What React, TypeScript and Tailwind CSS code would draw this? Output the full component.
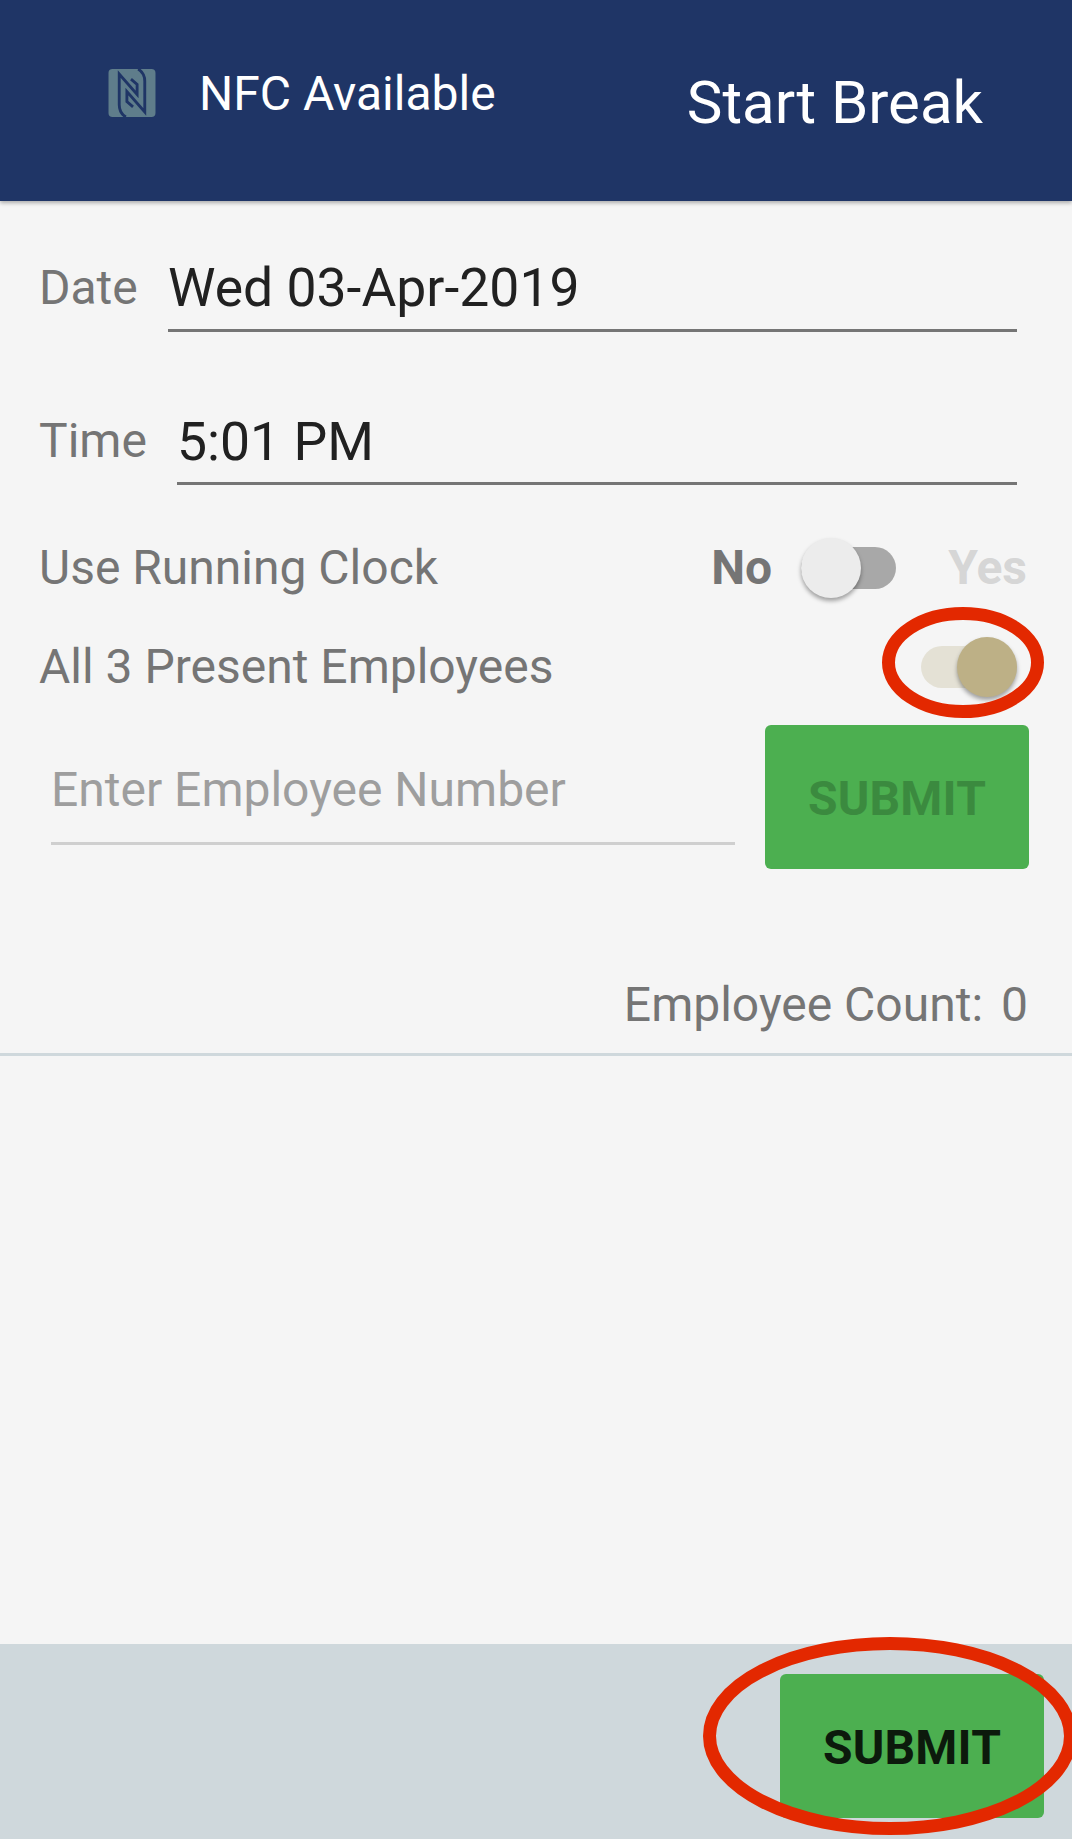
export default function App() {
  return (
    <div className="relative w-[1072px] h-[1839px] overflow-hidden bg-[#f5f5f5] flex flex-col font-['Roboto',sans-serif]">
      <header className="h-[201px] shrink-0 bg-[#1f3566] shadow-[0_2px_4px_rgba(0,0,0,0.3)] z-10 flex items-start text-white">
        <svg className="mt-[69px] ml-[108px] w-[48px] h-[48px]" viewBox="0 0 46 47">
          <rect x="0" y="0" width="46" height="47" rx="4" fill="#5f7d8b" />
          <g fill="none" stroke="#1f3566" strokeWidth="2.8" strokeLinejoin="miter">
            <path d="M17 47 C12 44 10.5 40 10.5 35 L10.5 5 L28 25 L28 15 L22 10" />
            <path d="M29 0 C34 3 35.5 7 35.5 12 L35.5 42 L18 22 L18 32 L24 37" />
          </g>
        </svg>
        <span className="mt-[64px] ml-[43px] text-[48px] leading-[60px]">NFC Available</span>
        <span className="mt-[66px] ml-auto mr-[89px] text-[60px] leading-[74px]">Start Break</span>
      </header>
      <main className="flex-1 flex flex-col">
        <div className="mt-[50px] ml-[39px] mr-[55px] flex items-end h-[81px]">
          <span className="w-[129px] shrink-0 text-[48px] leading-[56px] pb-[16px] text-[#757575]">Date</span>
          <div className="flex-1 border-b-[3px] border-[#757575] text-[53.5px] leading-[74px] text-[#212121] h-[81px]">Wed 03-Apr-2019</div>
        </div>
        <div className="mt-[73px] ml-[39px] mr-[55px] flex items-end h-[80px]">
          <span className="w-[138px] shrink-0 text-[48px] leading-[56px] pb-[16px] text-[#757575]">Time</span>
          <div className="flex-1 border-b-[3px] border-[#757575] text-[53.5px] leading-[74px] text-[#212121] h-[80px]">5:01 PM</div>
        </div>
        <div className="mt-[53px] ml-[39px] mr-[45px] flex items-center h-[60px] text-[48px] text-[#757575]">
          <span className="flex-1">Use Running Clock</span>
          <span className="font-bold">No</span>
          <div className="relative ml-[29px] w-[95px] h-[42px] rounded-full bg-[#a8a8a8]">
            <div className="absolute left-0 top-[-9px] w-[60px] h-[60px] rounded-full bg-[#ececec] shadow-[0_3px_4px_rgba(0,0,0,0.35)]" />
          </div>
          <span className="ml-[52px] font-bold text-[#d6d6d6]">Yes</span>
        </div>
        <div className="mt-[39px] ml-[39px] mr-[55px] flex items-center h-[60px] text-[48px] text-[#757575]">
          <span className="flex-1">All 3 Present Employees</span>
          <div className="relative w-[96px] h-[42px] rounded-full bg-[#e4e1d5]">
            <div className="absolute right-0 top-[-9px] w-[60px] h-[60px] rounded-full bg-[#bdb086] shadow-[0_3px_4px_rgba(0,0,0,0.35)]" />
          </div>
        </div>
        <div className="mt-[28px] ml-[51px] mr-[43px] flex items-start h-[144px]">
          <div className="w-[684px] h-[120px] border-b-[3px] border-[#cfcfcf] text-[48px] leading-[129px] text-[#9e9e9e]">Enter Employee Number</div>
          <div className="ml-auto w-[264px] h-[144px] rounded-[6px] bg-[#4caf50] flex items-center justify-center pt-[3px] text-[48px] tracking-[0.2px] font-bold text-[#3b8a3f]">SUBMIT</div>
        </div>
        <div className="mt-[106px] mr-[44px] flex justify-end gap-[18px] text-[48px] leading-[60px] text-[#757575]">
          <span>Employee Count:</span>
          <span>0</span>
        </div>
        <div className="mt-[18px] h-[3px] bg-[#cfd8dc]" />
      </main>
      <footer className="h-[195px] shrink-0 bg-[#cfd8dc] flex justify-end items-start pt-[30px] pr-[28px]">
        <div className="w-[264px] h-[144px] rounded-[6px] bg-[#4caf50] flex items-center justify-center pt-[4px] text-[48px] tracking-[0.2px] font-bold text-[#0c1a0c]">SUBMIT</div>
      </footer>
      <svg className="absolute left-[882px] top-[607px]" width="162" height="111" viewBox="0 0 162 111">
        <ellipse cx="81" cy="55.5" rx="74.5" ry="49" fill="none" stroke="#e32800" strokeWidth="13" />
      </svg>
      <svg className="absolute left-[703px] top-[1637px]" width="369" height="198" viewBox="0 0 369 198">
        <ellipse cx="187" cy="99" rx="180.5" ry="92.5" fill="none" stroke="#e32800" strokeWidth="13" />
      </svg>
    </div>
  );
}
